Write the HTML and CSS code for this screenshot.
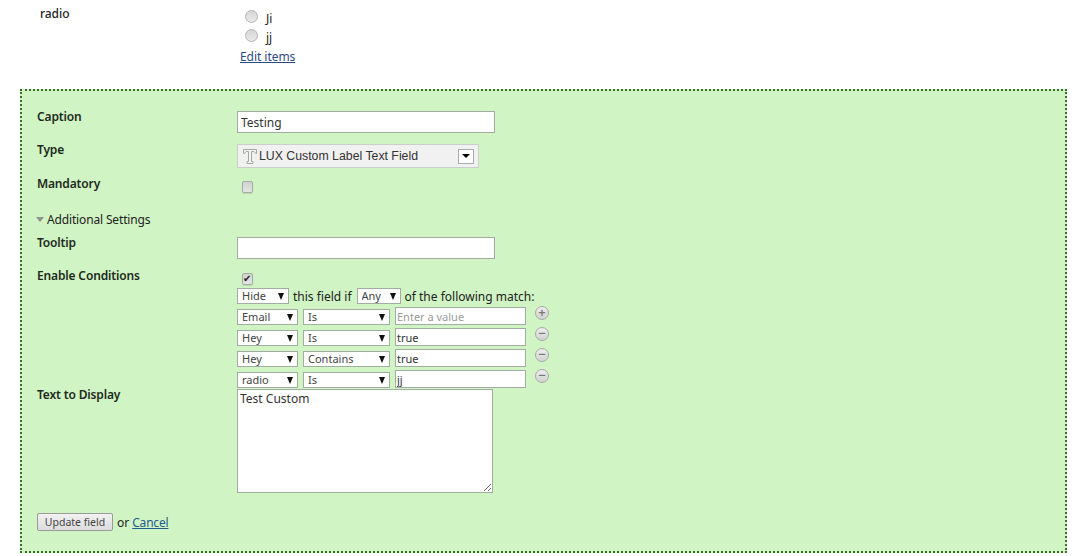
FILE: index.html
```html
<!DOCTYPE html>
<html lang="en">
<head>
<meta charset="utf-8">
<title>Edit field</title>
<link rel="stylesheet" href="styles.css">
</head>
<body>
<section class="preview">
  <div class="preview-label">radio</div>
  <div class="preview-body">
    <label class="option"><input type="radio" name="r" class="radio"><span>Ji</span></label>
    <label class="option"><input type="radio" name="r" class="radio"><span>jj</span></label>
    <a href="#" class="link link-edit">Edit items</a>
  </div>
</section>
<form class="panel">
  <div class="row row-caption">
    <div class="label">Caption</div>
    <input class="text text-wide" value="Testing">
  </div>
  <div class="row row-type">
    <div class="label">Type</div>
    <div class="type-select">
      <svg class="type-icon" width="14" height="15" viewBox="0 0 14 15"><path d="M.5 4.500V.5h13v4h-1L11 2.500H8.500v10H10v2H4v-2h1.500v-10H3L1.500 4.500z" fill="#f4f4f4" stroke="#a3a8a3" stroke-width="1"/></svg>
      <span class="type-text">LUX Custom Label Text Field</span>
      <span class="type-arrow"></span>
    </div>
  </div>
  <div class="row row-mandatory">
    <div class="label">Mandatory</div>
    <input type="checkbox" class="check">
  </div>
  <div class="additional"><span class="disclosure"></span>Additional Settings</div>
  <div class="row row-tooltip">
    <div class="label">Tooltip</div>
    <input class="text text-wide">
  </div>
  <div class="row row-conditions">
    <div class="label">Enable Conditions</div>
    <div class="conditions">
      <input type="checkbox" class="check check-on" checked>
      <div class="match-line">
        <span class="sel sel-hide"><select><option>Hide</option></select></span>
        <span>this field if</span>
        <span class="sel sel-any"><select><option>Any</option></select></span>
        <span>of the following match:</span>
      </div>
      <div class="cond">
        <span class="sel sel-field"><select><option>Email</option></select></span>
        <span class="sel sel-op"><select><option>Is</option></select></span>
        <input class="text text-val" placeholder="Enter a value">
        <span class="round">+</span>
      </div>
      <div class="cond">
        <span class="sel sel-field"><select><option>Hey</option></select></span>
        <span class="sel sel-op"><select><option>Is</option></select></span>
        <input class="text text-val" value="true">
        <span class="round">−</span>
      </div>
      <div class="cond">
        <span class="sel sel-field"><select><option>Hey</option></select></span>
        <span class="sel sel-op"><select><option>Contains</option></select></span>
        <input class="text text-val" value="true">
        <span class="round">−</span>
      </div>
      <div class="cond">
        <span class="sel sel-field"><select><option>radio</option></select></span>
        <span class="sel sel-op"><select><option>Is</option></select></span>
        <input class="text text-val" value="jj">
        <span class="round">−</span>
      </div>
    </div>
  </div>
  <div class="row row-display">
    <div class="label">Text to Display</div>
    <textarea class="area">Test Custom</textarea>
  </div>
  <div class="actions">
    <button type="button" class="btn">Update field</button>
    <span>or</span>
    <a href="#" class="link link-cancel">Cancel</a>
  </div>
</form>
</body>
</html>
```
FILE: styles.css
```css
* { box-sizing: border-box; }
html, body { height: 100%; overflow: hidden; }
body {
  margin: 0;
  background: #fff;
  color: #222;
  font-family: "Noto Sans", "DejaVu Sans", sans-serif;
  font-size: 12px;
  line-height: 15px;
}
.preview {
  display: grid;
  grid-template-columns: 200px 1fr;
  height: 89px;
  padding: 6px 0 0 40px;
}
.preview-label { color: #222; font-weight: 500; letter-spacing: -.05px; }
.preview-body { display: flex; flex-direction: column; padding-top: 1px; }
.option { display: flex; align-items: center; height: 19px; gap: 8px; padding-left: 5px; }
.option span { padding-top: 3px; }
.link-edit { margin-top: 4px; letter-spacing: -.05px; }
.radio {
  appearance: none;
  margin: 0;
  width: 13px;
  height: 13px;
  border-radius: 50%;
  border: 1px solid #b5b5b5;
  background: linear-gradient(#d6d6d6, #e9e9e9);
}
.link { color: #2d4a85; text-decoration: underline; }
.panel {
  height: 464px;
  width: 1047px;
  margin-left: 20px;
  padding: 20px 15px 0;
  background: #d1f4c4;
  border: 2px dotted #3a6f2b;
}
.row { display: grid; grid-template-columns: 200px 1fr; }
.label { font-weight: 600; color: #1d2a1d; line-height: 14px; margin-top: -1px; letter-spacing: -.15px; }
.row-caption { height: 33px; }
.row-type { height: 34px; }
.row-mandatory { height: 33px; }
.row-mandatory .check { margin: 3px 0 0 5px; }
.additional { display: flex; align-items: center; height: 15px; margin: 1px 0 10px; gap: 3px; color: #222; letter-spacing: -.15px; }
.disclosure {
  width: 0; height: 0;
  border-left: 4px solid transparent;
  border-right: 4px solid transparent;
  border-top: 5px solid #8b958b;
  margin-left: -1px;
}
.row-tooltip { height: 33px; }
.row-conditions { height: 119px; }
.row-display { height: 124px; }
.text {
  height: 22px;
  padding: 0 3px;
  font: inherit;
  color: #333;
  background: #fff;
  border: 1px solid #a3aca3;
  outline: none;
}
.text::placeholder { color: #9a9a9a; opacity: 1; }
.text-wide { width: 258px; }
.text-val { width: 131px; height: 18px; padding: 0 1px; font-size: 11px; }
.type-select {
  display: flex;
  align-items: center;
  width: 242px;
  height: 24px;
  padding: 0 4px 0 5px;
  background: #f1f1f1;
  border: 1px solid #c9cfc9;
  font-family: "Liberation Sans", Arial, sans-serif;
  font-size: 12.3px;
  color: #333;
}
.type-icon { flex: none; }
.type-text { flex: 1; padding-left: 2px; white-space: nowrap; }
.type-arrow {
  position: relative;
  flex: none;
  width: 16px;
  height: 15px;
  background: #fff;
  border: 1px solid #aaa;
}
.type-arrow::after {
  content: "";
  position: absolute;
  left: 3px;
  top: 4px;
  border-left: 4px solid transparent;
  border-right: 4px solid transparent;
  border-top: 4px solid #000;
}
.check {
  appearance: none;
  display: block;
  margin: 0;
  width: 11px;
  height: 12px;
  border: 1px solid #a9a9a9;
  border-radius: 2px;
  background: linear-gradient(#cfd3cf, #e4e6e4);
  box-shadow: 0 1px 1px rgba(0,0,0,.12);
}
.check-on { margin: 0 0 3px 5px; position: relative; }
.check-on::after {
  content: "✔";
  position: absolute;
  left: 0;
  top: -2px;
  font-size: 10px;
  line-height: 14px;
  color: #222;
}
.conditions { display: flex; flex-direction: column; padding-top: 3px; }
.match-line { display: flex; align-items: center; gap: 4px; height: 16px; margin-bottom: 3px; white-space: nowrap; }
.cond { display: flex; align-items: flex-start; gap: 4px; height: 21px; }
.sel { position: relative; display: block; height: 16px; flex: none; }
.sel::after {
  content: "";
  position: absolute;
  right: 5px;
  top: 5px;
  border-left: 3.500px solid transparent;
  border-right: 3.500px solid transparent;
  border-top: 7px solid #111;
  pointer-events: none;
}
.sel select {
  appearance: none;
  display: block;
  width: 100%;
  height: 100%;
  padding: 0 0 0 4px;
  border: 1px solid #a3aca3;
  background: #fff;
  font: inherit;
  font-size: 11px;
  line-height: 14px;
  color: #444;
  border-radius: 0;
}
.sel-hide { width: 52px; }
.sel-any { width: 44px; margin-left: 1px; }
.sel-field { width: 61px; }
.sel-op { width: 87px; }
.cond .sel { margin-top: 2px; }
.cond .sel-op { margin-left: 1px; }
.cond .text { margin-left: 1px; }
.round {
  flex: none;
  width: 14px;
  height: 14px;
  margin: -1px 0 0 5px;
  border-radius: 50%;
  border: 1px solid #a8a8a8;
  background: linear-gradient(#eee, #cfd3cf);
  color: #777;
  font-size: 13px;
  line-height: 11px;
  text-align: center;
  font-weight: 600;
}
.area {
  display: block;
  width: 256px;
  height: 104px;
  padding: 1px 2px;
  font: inherit;
  color: #333;
  background: #fff;
  border: 1px solid #a3aca3;
  outline: none;
  resize: both;
}
.actions { display: flex; align-items: center; gap: 4px; height: 18px; }
.btn {
  width: 76px;
  height: 18px;
  padding: 0;
  font: inherit;
  font-size: 10.500px;
  line-height: 14px;
  color: #444;
  background: linear-gradient(#f2f2f2, #dcdcdc);
  border: 1px solid #9a9a9a;
  border-radius: 2px;
}
.link-cancel { color: #1f5c8c; margin-left: -1px; letter-spacing: -.2px; }
```
